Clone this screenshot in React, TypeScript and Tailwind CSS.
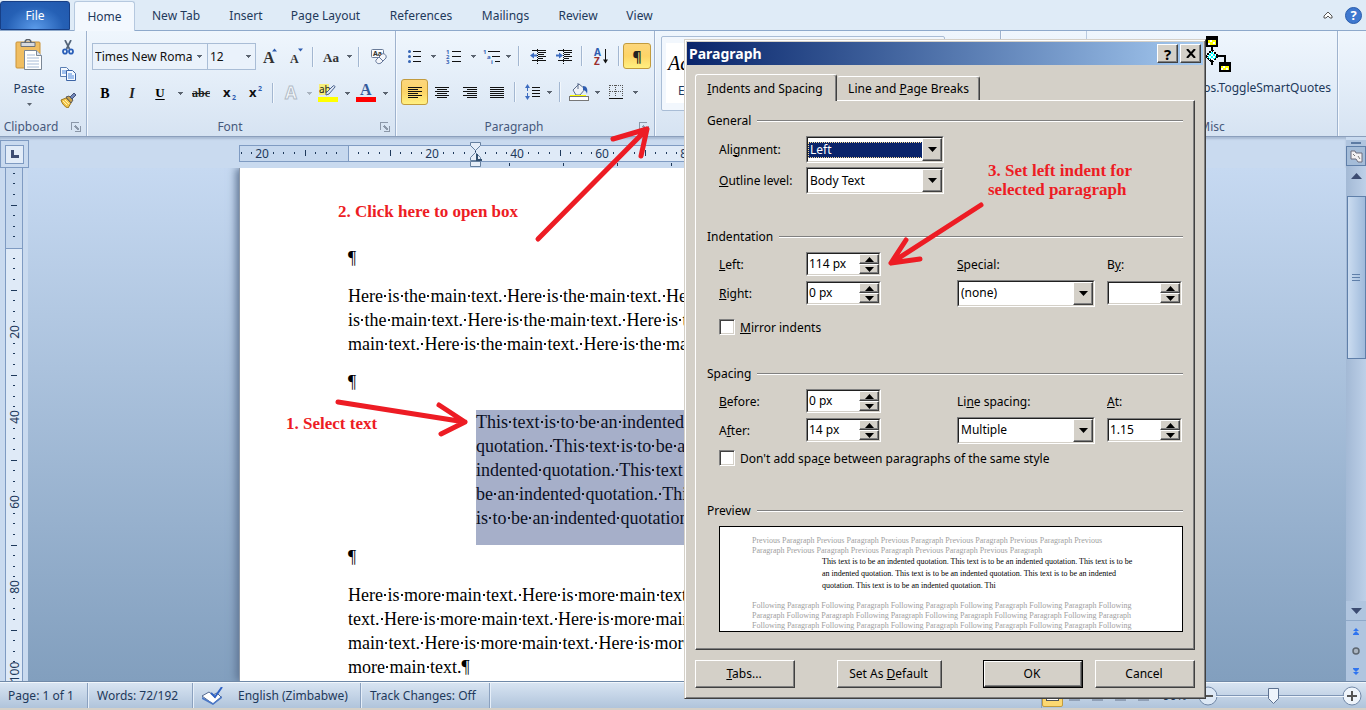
import { Fragment, type ReactNode } from "react";

const raised =
  "border border-t-white border-l-white border-b-[#404040] border-r-[#404040] bg-[#d4d0c8] shadow-[inset_-1px_-1px_#808080]";
const sunken =
  "border border-t-[#808080] border-l-[#808080] border-b-white border-r-white bg-[#d4d0c8]";
const sunkenInner =
  "border border-t-[#202020] border-l-[#202020] border-b-[#d4d0c8] border-r-[#d4d0c8] bg-white";

const ribbonTabs = [
  { name: "New Tab", width: "w-20" },
  { name: "Insert", width: "w-[60px]" },
  { name: "Page Layout", width: "w-[99px]" },
  { name: "References", width: "w-[92px]" },
  { name: "Mailings", width: "w-[77px]" },
  { name: "Review", width: "w-[68px]" },
  { name: "View", width: "w-[55px]" },
];

/* ---------- ribbon ---------- */

function Caret({ className = "w-3", faded = false }: { className?: string; faded?: boolean }) {
  return (
    <button aria-label="More options" className={`flex h-6 shrink-0 items-center justify-center ${className}`}>
      <svg width="5" height="3" viewBox="0 0 5 3" shapeRendering="crispEdges">
        <path d="M0 0h5L2.5 3z" fill={faded ? "#a9b3bf" : "#5b6470"} />
      </svg>
    </button>
  );
}

function Sep({ className = "w-2.5" }: { className?: string }) {
  return (
    <div className={`flex shrink-0 justify-center ${className}`}>
      <div className="h-5 w-0.5 border-l border-[#a3b7d1] bg-[#f3f8fd]" />
    </div>
  );
}

type ToolProps = {
  label: string;
  className: string;
  active?: boolean;
  children: ReactNode;
};

function Tool({ label, className, active = false, children }: ToolProps) {
  return (
    <button
      aria-label={label}
      className={`flex h-[26px] shrink-0 items-center justify-center ${className} ${
        active
          ? "rounded-[3px] border border-[#c29b3d] bg-linear-to-b from-[#fcd67c] via-[#fdd467] to-[#fff080]"
          : ""
      }`}
    >
      {children}
    </button>
  );
}

function Launcher({ label }: { label: string }) {
  return (
    <button aria-label={label} className="absolute right-[5px] bottom-1">
      <svg width="10" height="10" viewBox="0 0 10 10" fill="none" shapeRendering="crispEdges">
        <path d="M.5 8V.5H8" stroke="#8b97a8" />
        <path d="M4 4l4 4" stroke="#8b97a8" strokeWidth="1.5" />
        <path d="M9.5 4v5.5H4" stroke="#8b97a8" strokeWidth="2" />
      </svg>
    </button>
  );
}

type GroupProps = {
  title: string;
  className: string;
  launcher?: boolean;
  children: ReactNode;
};

function Group({ title, className, launcher = false, children }: GroupProps) {
  return (
    <section
      className={`relative flex shrink-0 flex-col border-r border-[#9fb3ce] shadow-[1px_0_#f5f9fe] ${className}`}
    >
      <div className="min-h-0 flex-1">{children}</div>
      <h2 className="h-[19px] text-center leading-5 text-[#46597c]">{title}</h2>
      {launcher && <Launcher label={`${title} settings`} />}
    </section>
  );
}

function Lines({ rows, y = 1 }: { rows: [number, number][]; y?: number }) {
  return (
    <g fill="#111" shapeRendering="crispEdges">
      {rows.map(([x, w], i) => (
        <rect key={i} x={x} y={y + i * 2} width={w} height="1" />
      ))}
    </g>
  );
}

function AlignIcon({ kind }: { kind: "left" | "center" | "right" | "justify" }) {
  const short = { left: 0, center: 2, right: 4, justify: 0 }[kind];
  const w = kind === "justify" ? 14 : 10;
  return (
    <svg width="14" height="13" viewBox="0 0 14 13">
      <Lines
        rows={[
          [0, 14],
          [short, w],
          [0, 14],
          [short, w],
          [0, 14],
          [short, w],
        ]}
      />
    </svg>
  );
}

function IndentIcon({ direction }: { direction: "in" | "out" }) {
  return (
    <svg width="17" height="15" viewBox="0 0 17 15">
      <Lines
        rows={[
          [2, 14],
          [8, 8],
          [8, 6],
          [8, 8],
          [8, 5],
          [2, 14],
        ]}
        y={1}
      />
      <path d="M7.5 0v15" stroke="#111" strokeDasharray="1 1" />
      {direction === "out" ? (
        <path d="M0 6.500l4-3v2h3v2h-3v2z" fill="#3c6cc0" />
      ) : (
        <path d="M7 6.500l-4-3v2h-3v2h3v2z" fill="#3c6cc0" />
      )}
    </svg>
  );
}

function PasteIcon() {
  return (
    <svg width="28" height="32" viewBox="0 0 28 32">
      <rect x="1" y="3" width="24" height="26" rx="1" fill="#f0be62" stroke="#c99237" />
      <path d="M6 3.500h14v4H6z" fill="#d7dade" stroke="#6d737b" />
      <path d="M10 3.500c0-4 6-4 6 0" fill="none" stroke="#5c6269" strokeWidth="1.500" />
      <path d="M9.500 11.500h12l5 5v14h-17z" fill="#fff" stroke="#7b8796" />
      <path d="M21.500 11.500v5h5" fill="#dbe2ea" stroke="#7b8796" />
      <path d="M12 16h8M12 19h12M12 22h12M12 25h12M12 28h12" stroke="#a7bbd7" />
    </svg>
  );
}

function CutIcon() {
  return (
    <svg width="12" height="15" viewBox="0 0 12 15" fill="none">
      <path d="M3 0l4.500 9M9 0L4.500 9" stroke="#536479" strokeWidth="1.700" />
      <ellipse cx="3" cy="11.500" rx="2" ry="2.200" stroke="#2b5fb8" strokeWidth="1.800" />
      <ellipse cx="9" cy="11.500" rx="2" ry="2.200" stroke="#2b5fb8" strokeWidth="1.800" />
    </svg>
  );
}

function CopyIcon() {
  return (
    <svg width="16" height="14" viewBox="0 0 16 14">
      <path d="M.5.5h6l3 3v6h-9z" fill="#f4f9ff" stroke="#5b7fb4" />
      <path d="M2 4h4M2 6h4" stroke="#4a86dd" />
      <path d="M6.500 3.500h6l3 3v7h-9z" fill="#f4f9ff" stroke="#3c64a5" />
      <path d="M8 7h4M8 9h6M8 11h6" stroke="#4a86dd" />
    </svg>
  );
}

function PainterIcon() {
  return (
    <svg width="17" height="15" viewBox="0 0 17 15">
      <path d="M1 7l5-2 5 5-3 5c-3-1-6-4-7-8z" fill="#f3c64b" stroke="#9c7722" />
      <path d="M3 8l4 4M5 7l4 4" stroke="#fff2b0" />
      <path d="M6 4l3-1 4 4-2 3z" fill="#c9a24a" stroke="#5c5c5c" />
      <path d="M10 4l4-4 2 2-4 4z" fill="#7287b8" stroke="#465379" />
    </svg>
  );
}

function GlyphIcon({ width, children }: { width: number; children: ReactNode }) {
  return (
    <svg
      width={width}
      height="20"
      viewBox={`0 0 ${width} 20`}
      className="overflow-visible font-['Liberation_Serif',serif] font-bold"
    >
      {children}
    </svg>
  );
}

function ClipboardGroup() {
  return (
    <Group title="Clipboard" className="w-[87px] [&>h2]:pr-6" launcher>
      <div className="flex pt-2">
        <button className="flex w-[58px] flex-col items-center text-[#1e395b]">
          <PasteIcon />
          <span className="mt-2 leading-5">Paste</span>
          <svg width="5" height="3" viewBox="0 0 5 3" className="mt-1">
            <path d="M0 0h5L2.500 3z" fill="#5b6470" />
          </svg>
        </button>
        <div className="flex w-5 flex-col items-center">
          <button aria-label="Cut" className="flex h-[26px] items-start pt-px">
            <CutIcon />
          </button>
          <button aria-label="Copy" className="flex h-[26px] items-start pt-0.5">
            <CopyIcon />
          </button>
          <button aria-label="Format Painter" className="flex h-[26px] items-start pt-0.5">
            <PainterIcon />
          </button>
        </div>
      </div>
    </Group>
  );
}

function FontGroup() {
  return (
    <Group title="Font" className="w-[309px] [&>h2]:pr-[22px]" launcher>
      <div className="flex flex-col gap-2.5 pt-3 pl-[5px]">
        <div className="flex items-center">
          <div className="flex h-[27px] w-[116px] items-center border border-[#a9bdd6] bg-[#eaf2fb] pl-0.5">
            <input
              aria-label="Font name"
              defaultValue="Times New Roman"
              className="w-[98px] bg-transparent text-[#111] outline-none"
            />
            <Caret />
          </div>
          <div className="-ml-px flex h-[27px] w-[49px] items-center border border-[#a9bdd6] bg-[#eaf2fb] pl-0.5">
            <input
              aria-label="Font size"
              defaultValue="12"
              className="w-8 bg-transparent text-[#111] outline-none"
            />
            <Caret />
          </div>
          <Tool label="Grow Font" className="w-7">
            <GlyphIcon width={14}>
              <text x="0" y="16" fontSize="16" fill="#333">A</text>
              <path d="M9 4.500h5l-2.500-3z" fill="#2f5db0" />
            </GlyphIcon>
          </Tool>
          <Tool label="Shrink Font" className="w-6">
            <GlyphIcon width={13}>
              <text x="0" y="16" fontSize="12" fill="#333">A</text>
              <path d="M8 1.500h5l-2.500 3z" fill="#2f5db0" />
            </GlyphIcon>
          </Tool>
          <Sep />
          <Tool label="Change Case" className="w-[26px]">
            <GlyphIcon width={16}>
              <text x="0" y="15" fontSize="13" fill="#333">Aa</text>
            </GlyphIcon>
          </Tool>
          <Caret className="w-2.5" />
          <Sep />
          <Tool label="Clear Formatting" className="w-7">
            <svg width="17" height="17" viewBox="0 0 17 17">
              <rect x="1.500" y="1.500" width="12" height="8" rx="1" fill="#f9fbff" stroke="#6a7c99" />
              <text x="3" y="8" fontSize="7" fill="#333" fontWeight="bold">Aa</text>
              <path d="M6 12l6-6c2-1 5 1 4 4l-5 5c-3 2-6-1-5-3z" fill="#f4f6fa" stroke="#65779a" />
              <path d="M9 9l4 4" stroke="#65779a" />
            </svg>
          </Tool>
        </div>
        <div className="flex items-center">
          <Tool label="Bold" className="w-[26px]">
            <span className="font-['Liberation_Serif',serif] text-[14px] font-bold text-black">B</span>
          </Tool>
          <Tool label="Italic" className="w-7">
            <span className="font-['Liberation_Serif',serif] text-[14px] font-bold text-[#222] italic">I</span>
          </Tool>
          <Tool label="Underline" className="w-7">
            <span className="font-['Liberation_Serif',serif] text-[13px] font-bold text-black underline underline-offset-2">
              U
            </span>
          </Tool>
          <Caret />
          <Tool label="Strikethrough" className="w-[30px]">
            <span className="font-['Liberation_Serif',serif] text-[12px] font-bold text-[#222] line-through">abc</span>
          </Tool>
          <Tool label="Subscript" className="w-[26px]">
            <GlyphIcon width={13}>
              <text x="0" y="14" fontSize="13" fill="#111" className="font-['Noto_Sans',sans-serif]">x</text>
              <text x="9" y="17" fontSize="7" fill="#2f5db0" className="font-['Noto_Sans',sans-serif]">2</text>
            </GlyphIcon>
          </Tool>
          <Tool label="Superscript" className="w-[26px]">
            <GlyphIcon width={13}>
              <text x="0" y="14" fontSize="13" fill="#111" className="font-['Noto_Sans',sans-serif]">x</text>
              <text x="9" y="8" fontSize="7" fill="#2f5db0" className="font-['Noto_Sans',sans-serif]">2</text>
            </GlyphIcon>
          </Tool>
          <Sep />
          <Tool label="Text Effects" className="w-[26px]">
            <GlyphIcon width={14}>
              <text
                x="1"
                y="16"
                fontSize="17"
                fill="#f4f8fc"
                stroke="#b3bcc7"
                className="font-['Noto_Sans',sans-serif]"
              >
                A
              </text>
            </GlyphIcon>
          </Tool>
          <Caret className="w-2.5" faded />
          <Tool label="Text Highlight Color" className="w-7">
            <svg width="20" height="20" viewBox="0 0 20 20">
              <rect x="1" y="1" width="10" height="11" fill="#f6ef7a" />
              <text x="1" y="10" fontSize="10" fill="#222">ab</text>
              <path d="M8 10l7-7c1-1 2 0 2 1l-6 7-3 1z" fill="#dfe7f3" stroke="#4b6490" />
              <rect y="14" width="20" height="5" fill="#ff0" />
            </svg>
          </Tool>
          <Caret className="w-2.5" />
          <Tool label="Font Color" className="w-7">
            <GlyphIcon width={20}>
              <text x="4" y="12" fontSize="16" fill="#355b9b">A</text>
              <rect y="14" width="20" height="5" fill="#f00" />
            </GlyphIcon>
          </Tool>
          <Caret className="w-2.5" />
        </div>
      </div>
    </Group>
  );
}

function ParagraphGroup() {
  return (
    <Group title="Paragraph" className="w-[259px] [&>h2]:pr-[22px]" launcher>
      <div className="flex flex-col gap-2.5 pt-3 pl-[5px]">
        <div className="flex items-center">
          <Tool label="Bullets" className="w-[26px]">
            <svg width="13" height="13" viewBox="0 0 13 13">
              <g fill="#3564b4">
                <circle cx="1.500" cy="1.500" r="1.500" />
                <circle cx="1.500" cy="6.500" r="1.500" />
                <circle cx="1.500" cy="11.500" r="1.500" />
              </g>
              <path d="M5 1.500h8M5 6.500h8M5 11.500h8" stroke="#111" />
            </svg>
          </Tool>
          <Caret />
          <Tool label="Numbering" className="w-7">
            <svg width="15" height="15" viewBox="0 0 15 15" className="overflow-visible">
              <g fill="#3564b4" fontSize="6" fontWeight="bold">
                <text x="0" y="5">1</text>
                <text x="0" y="10">2</text>
                <text x="0" y="15">3</text>
              </g>
              <path d="M6 2.500h9M6 7.500h9M6 12.500h9" stroke="#111" />
            </svg>
          </Tool>
          <Caret />
          <Tool label="Multilevel List" className="w-6">
            <svg width="17" height="15" viewBox="0 0 17 15" className="overflow-visible">
              <g fill="#3564b4" fontSize="6" fontWeight="bold">
                <text x="0" y="5">1</text>
                <text x="4" y="10">a</text>
                <text x="8" y="15">i</text>
              </g>
              <path d="M5 2.500h12M9 7.500h8M12 12.500h5" stroke="#111" />
            </svg>
          </Tool>
          <Caret className="w-2.5" />
          <Sep className="w-3" />
          <Tool label="Decrease Indent" className="w-[26px]">
            <IndentIcon direction="out" />
          </Tool>
          <Tool label="Increase Indent" className="w-[26px]">
            <IndentIcon direction="in" />
          </Tool>
          <Sep />
          <Tool label="Sort" className="w-7">
            <svg width="15" height="17" viewBox="0 0 15 17" fontSize="10" fontWeight="bold" className="overflow-visible">
              <text x="0" y="8" fill="#2f5db0">A</text>
              <text x="0" y="17" fill="#9b2d2d">Z</text>
              <path d="M11.500 1v13" stroke="#111" />
              <path d="M9 11.500h5l-2.500 4z" fill="#111" />
            </svg>
          </Tool>
          <Sep className="w-2" />
          <Tool label="Show paragraph marks" className="w-7" active>
            <span className="text-[14px] font-bold text-[#222]">¶</span>
          </Tool>
        </div>
        <div className="flex items-center">
          <Tool label="Align Left" className="w-[27px]" active>
            <AlignIcon kind="left" />
          </Tool>
          <Tool label="Center" className="w-7">
            <AlignIcon kind="center" />
          </Tool>
          <Tool label="Align Right" className="w-7">
            <AlignIcon kind="right" />
          </Tool>
          <Tool label="Justify" className="w-[26px]">
            <AlignIcon kind="justify" />
          </Tool>
          <Sep />
          <Tool label="Line Spacing" className="w-6">
            <svg width="15" height="16" viewBox="0 0 15 16">
              <path d="M2.500 3v10" stroke="#3c6cc0" strokeDasharray="4 2" />
              <path d="M0 4h5L2.500 0zM0 12h5l-2.500 4z" fill="#3c6cc0" />
              <path d="M7 3.500h8M7 6.500h8M7 9.500h8M7 12.500h8" stroke="#111" />
            </svg>
          </Tool>
          <Caret className="w-2.5" />
          <Sep className="w-3" />
          <Tool label="Shading" className="w-[26px]">
            <svg width="20" height="18" viewBox="0 0 20 18">
              <path d="M4 7l6-6 6 5-5 6H7z" fill="#eef2f8" stroke="#5d6f8e" />
              <path d="M9 0v6" stroke="#5d6f8e" />
              <path d="M14 3c4 0 5 3 4 8-1-3-2-4-4-4z" fill="#2f5db0" />
              <rect x="1" y="12" width="16" height="2" fill="#ff0" />
              <rect x=".5" y="13.500" width="19" height="4" fill="#fff" stroke="#777" />
            </svg>
          </Tool>
          <Caret className="w-2.5" />
          <Tool label="Borders" className="w-7">
            <svg width="14" height="14" viewBox="0 0 14 14" shapeRendering="crispEdges">
              <path
                d="M.5.5h13M.5 6.500h13M.5 0v12M6.500 0v12M13.500 0v12"
                stroke="#555"
                strokeDasharray="1 1"
              />
              <path d="M0 13.500h14" stroke="#111" />
            </svg>
          </Tool>
          <Caret className="w-2.5" />
        </div>
      </div>
    </Group>
  );
}

function StylesGroup() {
  return (
    <Group title="Styles" className="w-[346px]">
      <div className="mt-[5px] ml-1.5 h-[75px] w-[284px] rounded-[2px] border border-[#a9bdd6] bg-[#f2f7fd] py-1.5 pl-1">
        <button className="flex h-15 w-16 flex-col bg-white pt-1 pl-0.5 text-left">
          <span className="font-['Liberation_Serif',serif] text-[20px] leading-8 text-black italic">AaBb</span>
          <span className="pl-2.5 leading-6 text-[#1e395b]">Emphasis</span>
        </button>
      </div>
    </Group>
  );
}

function MacroIcon() {
  return (
    <svg width="38" height="36" viewBox="0 0 38 36" shapeRendering="crispEdges">
      <path d="M19 10v5M19 25v4M6 20h26v7" fill="none" stroke="#000" strokeWidth="2" />
      <path d="M13 0h12v11H13zM0 26h12v10H0zM26 26h12v10H26z" fill="#000" />
      <path d="M15 4h8v5h-8zM2 30h8v4H2zM28 30h8v4h-8z" fill="#ff0" />
      <path d="M17 4h2v2h-2zM20 6h2v2h-2zM15 7h2v2h-2zM30 30h2v2h-2zM33 32h2v2h-2zM28 32h2v2h-2z" fill="#fff" />
      <path d="M19 14l6 6-6 6-6-6z" fill="#fff" stroke="#000" strokeWidth="1.500" strokeDasharray="2 1" />
      <path d="M18 16h2v2h-2zM16 18h2v2h-2zM20 18h2v2h-2zM18 20h2v2h-2zM15 20h1v2h-1zM22 20h1v2h-1zM16 22h2v1h-2zM20 22h2v1h-2z" fill="#0ff" />
    </svg>
  );
}

function Ribbon() {
  return (
    <header className="shrink-0">
      <nav className="flex h-[31px] border-b border-[#8ea9cb] bg-[#dfebf7] text-[#1e395b]">
        <button className="mt-px h-[29px] w-[70px] rounded-t-[3px] border border-[#173f86] bg-[radial-gradient(ellipse_at_bottom,#5b9bea_0%,#2560b5_60%,#2158ad_100%)] text-white">
          File
        </button>
        <button className="mt-px ml-1 h-[30px] w-[61px] rounded-t-[3px] border border-b-0 border-[#b5c8df] bg-[#f3f8fe]">
          Home
        </button>
        {ribbonTabs.map((tab) => (
          <button key={tab.name} className={`pt-0.5 pl-0.5 ${tab.width}`}>
            {tab.name}
          </button>
        ))}
        <div className="ml-auto flex items-center gap-3 pr-1">
          <button aria-label="Minimize the Ribbon">
            <svg width="10" height="8" viewBox="0 0 10 8">
              <path d="M1 5l4-4 4 4v2H7L5 5 3 7H1z" fill="#fff" stroke="#555" />
            </svg>
          </button>
          <button aria-label="Help">
            <svg width="17" height="17" viewBox="0 0 17 17">
              <circle cx="8.500" cy="8.500" r="8" fill="#3f78cf" stroke="#2a5cab" />
              <text x="8.500" y="13" fontSize="13" fontWeight="bold" fill="#fff" textAnchor="middle">?</text>
            </svg>
          </button>
        </div>
      </nav>
      <div className="flex h-[106px] overflow-hidden border-b border-[#8b9fbc] bg-linear-to-b from-[#eff6fd] via-[#e3edf8] to-[#d6e3f2]">
        <ClipboardGroup />
        <FontGroup />
        <ParagraphGroup />
        <StylesGroup />
        <div className="w-[86px] shrink-0 border-r border-[#b9cae0]" />
        <Group title="Misc" className="w-[251px]">
          <button className="flex w-full flex-col items-center pt-[5px] text-[#1e395b]">
            <MacroIcon />
            <span className="mt-1.5 w-full pr-1.5 text-right leading-5">Normal.NewMacros.ToggleSmartQuotes</span>
          </button>
        </Group>
      </div>
    </header>
  );
}

/* ---------- rulers ---------- */

const rulerStep = 85 / 8;

function HorizontalRuler() {
  const marks = Array.from({ length: 75 }, (_, i) => i - 10).filter((k) => k !== 0);
  return (
    <svg width="868" height="28" className="shrink-0 overflow-hidden text-[12px]" shapeRendering="crispEdges">
      <rect x=".5" y="5.500" width="867" height="16" fill="#dfeaf7" stroke="#7f9bc2" />
      <rect x=".5" y="5.500" width="109" height="16" fill="#c6d8ee" stroke="#7f9bc2" />
      {marks.map((k) => {
        const x = Math.round(108 + k * rulerStep);
        if (k % 8 === 0) {
          return (
            <text key={k} x={x} y="18" textAnchor="middle" fill="#1e395b">
              {Math.abs(k / 8) * 20}
            </text>
          );
        }
        return k % 4 === 0 ? (
          <rect key={k} x={x} y="10" width="1" height="6" fill="#1e395b" />
        ) : (
          <rect key={k} x={x} y="12" width="1" height="2" fill="#1e395b" />
        );
      })}
      {[270, 324, 378, 432, 486].map((x) => (
        <rect key={x} x={x} y="23" width="1" height="3" fill="#1e395b" />
      ))}
      <g fill="#e6eef8" stroke="#66809f" shapeRendering="auto">
        <path d="M231.500 2.500h10v3l-5 5-5-5z" />
        <path d="M236.500 12.500l5 5v3h-10v-3z" />
        <path d="M231.500 21.500h10v5h-10z" />
      </g>
      <path d="M237.500 14v6h5" fill="none" stroke="#33506f" strokeWidth="2" />
    </svg>
  );
}

function VerticalRuler() {
  const marks = Array.from({ length: 90 }, (_, i) => i - 7).filter((k) => k !== 0);
  return (
    <svg className="h-full w-[18px] overflow-hidden text-[12px]" shapeRendering="crispEdges">
      <rect width="18" height="100%" fill="#dfeaf7" />
      <rect width="18" height="80" fill="#c6d8ee" />
      <path d="M0 80.500h18" stroke="#7f9bc2" />
      <path d="M.5 0v1200M17.500 0v1200" stroke="#7f9bc2" />
      {marks.map((k) => {
        const y = Math.round(79 + k * rulerStep);
        if (k % 8 === 0) {
          return (
            <text key={k} transform={`translate(14 ${y}) rotate(-90)`} textAnchor="middle" fill="#1e395b">
              {Math.abs(k / 8) * 20}
            </text>
          );
        }
        return k % 4 === 0 ? (
          <rect key={k} x="6" y={y} width="6" height="1" fill="#1e395b" />
        ) : (
          <rect key={k} x="8" y={y} width="2" height="1" fill="#1e395b" />
        );
      })}
    </svg>
  );
}

/* ---------- document ---------- */

// Formatting marks are on, so every space carries a dot.
function Line({ children }: { children: string }) {
  return (
    <div className="whitespace-pre">
      {children.split(" ").map((word, i) => (
        <Fragment key={i}>
          {i > 0 && (
            <span className="bg-[linear-gradient(#111,#111)] bg-[length:2px_2px] bg-center bg-no-repeat"> </span>
          )}
          {word}
        </Fragment>
      ))}
    </div>
  );
}

function DocumentPage() {
  return (
    <article className="ml-[211px] w-[868px] shrink-0 overflow-hidden border-l border-[#8c97a6] bg-white pt-[78px] pl-[108px] font-['Liberation_Serif',serif] text-[18px] leading-6 text-black shadow-[-3px_0_8px_#5f7594]">
      <p>¶</p>
      <div className="mt-3.5">
        <Line>Here is the main text. Here is the main text. Here is the main text. Here</Line>
        <Line>is the main text. Here is the main text. Here is the main text. Here is the</Line>
        <Line>main text. Here is the main text. Here is the main text.¶</Line>
      </div>
      <p className="mt-3.5">¶</p>
      <div className="mt-4 ml-32 bg-[#a6afc9] pb-[15px] text-[#0b1024]">
        <Line>This text is to be an indented quotation. This text is to be an indented</Line>
        <Line>quotation. This text is to be an indented quotation. This text is to be an</Line>
        <Line>indented quotation. This text is to be an indented quotation. This text is to</Line>
        <Line>be an indented quotation. This text is to be an indented quotation. This text</Line>
        <Line>is to be an indented quotation.¶</Line>
      </div>
      <p>¶</p>
      <div className="mt-3.5">
        <Line>Here is more main text. Here is more main text. Here is more main</Line>
        <Line>text. Here is more main text. Here is more main text. Here is more</Line>
        <Line>main text. Here is more main text. Here is more main text. Here is</Line>
        <Line>more main text.¶</Line>
      </div>
    </article>
  );
}

function ScrollBar() {
  return (
    <aside className="mt-[3px] flex w-5 shrink-0 flex-col items-center bg-[#b0c5df]">
      <div className="flex h-1.5 items-center">
        <div className="h-0.5 w-2.5 bg-[#5d7ba3]" />
      </div>
      <button
        aria-label="View Ruler"
        className="flex h-5 w-full items-center justify-center border border-[#5f7fa9] bg-[#a4bcd8]"
      >
        <svg width="13" height="13" viewBox="0 0 13 13">
          <path d="M1 1h4l1 2h6v9H8L6 9H1z" fill="#f3f1f3" stroke="#6c6c7c" />
          <path d="M3 4l2 2M8 6l2 3" stroke="#777" />
        </svg>
      </button>
      <div className="flex w-full flex-1 flex-col items-center bg-linear-to-r from-[#a3b9d5] to-[#bdd0e8]">
        <button aria-label="Scroll up" className="flex h-[30px] w-full justify-center pt-[7px]">
          <svg width="11" height="6" viewBox="0 0 11 6">
            <path d="M0 6L5.500 0 11 6z" fill="#3c4c72" />
          </svg>
        </button>
        <div className="flex h-[163px] w-[19px] items-center justify-center border border-[#5f7fa9] bg-linear-to-r from-[#cbdcf0] to-[#9fbadb]">
          <div className="h-[7px] w-2 bg-[repeating-linear-gradient(#5f7fa9_0_1px,transparent_1px_3px)]" />
        </div>
      </div>
      <button aria-label="Scroll down" className="flex h-5 w-full items-center justify-center border-b border-[#8fa9c9]">
        <svg width="11" height="6" viewBox="0 0 11 6">
          <path d="M0 0h11L5.500 6z" fill="#3c4c72" />
        </svg>
      </button>
      <button aria-label="Previous page" className="flex h-5 items-center">
        <svg width="6" height="7" viewBox="0 0 6 7" fill="#2f74f0">
          <path d="M3 0l3 3H0zM3 3l3 3H0zM0 6h6v1H0z" />
        </svg>
      </button>
      <button aria-label="Select browse object" className="flex h-5 items-center">
        <svg width="8" height="8" viewBox="0 0 8 8">
          <circle cx="4" cy="4" r="3" fill="#aab4c0" stroke="#5d6670" strokeWidth="1.500" />
        </svg>
      </button>
      <button aria-label="Next page" className="flex h-5 items-center">
        <svg width="6" height="7" viewBox="0 0 6 7" fill="#2f74f0">
          <path d="M0 0h6v1H0zM0 1h6L3 4zM0 4h6L3 7z" />
        </svg>
      </button>
    </aside>
  );
}

function Workspace() {
  return (
    <div className="flex min-h-0 flex-1 border-b border-[#7089a8] bg-[#c9daef]">
      <main className="flex min-w-0 flex-1 flex-col overflow-hidden">
        <div className="flex h-[31px] shrink-0 pt-[3px] shadow-[inset_0_2px_2px_#a9bbd3]">
          <button
            aria-label="Tab selector"
            className="flex h-7 w-[29px] shrink-0 items-center justify-center border border-[#7f9bc2]"
          >
            <span className="flex size-[19px] items-center justify-center border border-[#7f9bc2] bg-[#e2ecf8]">
              <svg width="8" height="8" viewBox="0 0 8 8">
                <path d="M1.500 0v6.500H8" fill="none" stroke="#3c4c72" strokeWidth="3" />
              </svg>
            </span>
          </button>
          <div className="ml-[210px]">
            <HorizontalRuler />
          </div>
        </div>
        <div className="flex min-h-0 flex-1">
          <div className="w-7 shrink-0 pl-[5px]">
            <VerticalRuler />
          </div>
          <div className="flex min-w-0 flex-1 overflow-hidden bg-linear-to-b from-[#c6d9f1] to-[#829fbe]">
            <DocumentPage />
          </div>
        </div>
      </main>
      <ScrollBar />
    </div>
  );
}

/* ---------- status bar ---------- */

const statusCell = "flex h-full items-center border-r border-[#8ba1bf] shadow-[1px_0_#e6eff9]";

function StatusBar() {
  return (
    <footer className="flex h-[26px] shrink-0 items-center border-t border-[#f2f7fc] bg-linear-to-b from-[#d8e4f2] to-[#b0c4db] text-[#1e395b]">
      <div className={`w-[88px] pl-2 ${statusCell}`}>Page: 1 of 1</div>
      <div className={`w-[105px] pl-[9px] ${statusCell}`}>Words: 72/192</div>
      <div className={`w-[168px] gap-[15px] pl-2 ${statusCell}`}>
        <svg width="22" height="18" viewBox="0 0 22 18">
          <path d="M1 9l7-4 4 3 4-2 4 4-8 7z" fill="#fff" stroke="#53698f" />
          <path d="M1 10v2l11 6 9-7v-2l-9 7z" fill="#4d79c7" />
          <path d="M12 8l2 3" stroke="#53698f" />
          <path d="M10 6l4 4 7-10" fill="none" stroke="#2f62c4" strokeWidth="2" />
        </svg>
        English (Zimbabwe)
      </div>
      <div className={`w-[129px] pl-[9px] ${statusCell}`}>Track Changes: Off</div>
      <div className="ml-auto flex h-full items-center">
        <div className="flex h-full items-center border-l border-[#8ba1bf]">
          <button
            aria-label="Print Layout"
            className="flex h-[23px] w-[21px] items-center justify-center rounded-[2px] border border-[#c29b3d] bg-[#fdd870]"
          >
            <svg width="13" height="11" viewBox="0 0 13 11">
              <rect x=".5" y=".5" width="12" height="10" fill="#fff" stroke="#555" />
            </svg>
          </button>
          {["Full Screen Reading", "Web Layout", "Outline", "Draft"].map((view) => (
            <button key={view} aria-label={view} className="flex w-[23px] items-center justify-center">
              <svg width="13" height="11" viewBox="0 0 13 11">
                <path d="M1 1.500h11M1 4.500h11M1 7.500h11M1 10h11" stroke="#66758c" />
              </svg>
            </button>
          ))}
        </div>
        <span className="ml-2 w-[35px]">90%</span>
        <button aria-label="Zoom out" className="-mr-0.5 shrink-0">
          <svg width="20" height="20" viewBox="0 0 20 20">
            <circle cx="10" cy="10" r="9" fill="#dde8f5" stroke="#7389a8" />
            <path d="M5 10h10" stroke="#555" strokeWidth="2" />
          </svg>
        </button>
        <label className="relative flex h-5 w-32 items-center">
          <span className="sr-only">Zoom</span>
          <span className="h-px w-full bg-[#7f96b6] shadow-[0_1px_#edf4fb]" />
          <svg width="11" height="16" viewBox="0 0 11 16" className="absolute left-[52px]">
            <path d="M.5.5h10v10l-5 5-5-5z" fill="#eef4fb" stroke="#5c7190" />
          </svg>
          <input type="range" min="10" max="190" defaultValue="90" className="absolute inset-0 opacity-0" />
        </label>
        <button aria-label="Zoom in" className="mr-1 -ml-0.5 shrink-0">
          <svg width="20" height="20" viewBox="0 0 20 20">
            <circle cx="10" cy="10" r="9" fill="#eef4fb" stroke="#7389a8" />
            <path d="M5 10h10M10 5v10" stroke="#555" strokeWidth="2" />
          </svg>
        </button>
      </div>
    </footer>
  );
}

/* ---------- paragraph dialog ---------- */

function Triangle({ up = false }: { up?: boolean }) {
  return (
    <svg width="9" height="5" viewBox="0 0 9 5">
      <path d={up ? "M0 5L4.500 0 9 5z" : "M0 0h9L4.500 5z"} fill="#000" />
    </svg>
  );
}

type SelectBoxProps = {
  id: string;
  value: string;
  options: string[];
  focused?: boolean;
};

function SelectBox({ id, value, options, focused = false }: SelectBoxProps) {
  return (
    <div className={`h-[27px] w-[138px] ${sunken}`}>
      <div className={`relative flex h-full items-center ${sunkenInner}`}>
        <select
          id={id}
          defaultValue={value}
          className={`w-full appearance-none pr-5 pl-0.5 outline-none ${
            focused ? "mr-[19px] h-4 border border-dotted border-[#f5db95] bg-[#0a246a] pl-px leading-[14px] text-white" : "h-full"
          }`}
        >
          {options.map((option) => (
            <option key={option}>{option}</option>
          ))}
        </select>
        <span className={`pointer-events-none absolute inset-y-0 right-0 flex w-5 items-center justify-center ${raised}`}>
          <Triangle />
        </span>
      </div>
    </div>
  );
}

function SpinBox({ id, value }: { id: string; value: string }) {
  return (
    <div className={`h-6 w-[75px] ${sunken}`}>
      <div className={`flex h-full ${sunkenInner}`}>
        <input id={id} defaultValue={value} className="min-w-0 flex-1 pl-px outline-none" />
        <div className="flex w-5 shrink-0 flex-col">
          <button aria-label="Increase" className={`flex flex-1 items-center justify-center ${raised}`}>
            <Triangle up />
          </button>
          <button aria-label="Decrease" className={`flex flex-1 items-center justify-center ${raised}`}>
            <Triangle />
          </button>
        </div>
      </div>
    </div>
  );
}

function CheckBox({ id, children }: { id: string; children: ReactNode }) {
  return (
    <div className="flex h-4 items-center gap-[5px] pl-3">
      <input
        id={id}
        type="checkbox"
        className="size-4 appearance-none border border-t-[#808080] border-r-white border-b-white border-l-[#808080] bg-white shadow-[inset_1px_1px_#404040,inset_-1px_-1px_#d4d0c8]"
      />
      <label htmlFor={id} className="pt-0.5">
        {children}
      </label>
    </div>
  );
}

function Heading({ children }: { children: ReactNode }) {
  return (
    <h3 className="mb-[5px] flex h-5 items-center gap-1.5">
      {children}
      <span className="h-0.5 flex-1 border-t border-[#808080] bg-white" />
    </h3>
  );
}

const fieldGrid =
  "grid grid-cols-[87px_151px_150px_75px] auto-rows-[24px] items-center gap-y-[5px] pl-3 [&_label]:pt-0.5";

function ParagraphDialog() {
  return (
    <div
      role="dialog"
      aria-label="Paragraph"
      className="absolute top-[39px] left-[684px] w-[522px] border border-t-[#d4d0c8] border-r-[#404040] border-b-[#404040] border-l-[#d4d0c8] bg-[#d4d0c8] p-0.5 text-black shadow-[inset_1px_1px_#fff,inset_-1px_-1px_#808080]"
    >
      <div className="flex h-[23px] items-center bg-linear-to-r from-[#0a246a] to-[#a6caf0] px-0.5 text-white">
        <h2 className="flex-1 text-[14px] leading-5 font-bold">Paragraph</h2>
        <button aria-label="Help" className={`flex h-[19px] w-[21px] items-center justify-center ${raised}`}>
          <span className="text-[15px] leading-4 font-bold text-black">?</span>
        </button>
        <button aria-label="Close" className={`ml-0.5 flex h-[19px] w-[21px] items-center justify-center ${raised}`}>
          <svg width="10" height="9" viewBox="0 0 10 9">
            <path d="M1 0l8 9M9 0L1 9" stroke="#000" strokeWidth="2" />
          </svg>
        </button>
      </div>

      <div className="px-2 pt-[9px] pb-2">
        <div className="flex items-end">
          <button className="relative z-10 -mb-px h-[27px] w-[142px] rounded-t-[3px] border border-b-0 border-t-white border-r-[#404040] border-l-white bg-[#d4d0c8] pt-px pr-0.5 shadow-[inset_-1px_0_#808080]">
            <u>I</u>ndents and Spacing
          </button>
          <button className="h-6 w-[143px] rounded-t-[3px] border border-b-0 border-t-white border-r-[#404040] border-l-transparent bg-[#d4d0c8] pt-px shadow-[inset_-1px_0_#808080]">
            Line and <u>P</u>age Breaks
          </button>
        </div>

        <div className="h-[550px] border border-t-white border-r-[#404040] border-b-[#404040] border-l-white px-[11px] pt-2.5 shadow-[inset_-1px_-1px_#808080]">
          <Heading>General</Heading>
          <div className="grid grid-cols-[87px_138px] items-center gap-y-1 pl-3">
            <label htmlFor="alignment">
              Ali<u>g</u>nment:
            </label>
            <SelectBox id="alignment" value="Left" options={["Left", "Centered", "Right", "Justified"]} focused />
            <label htmlFor="outline">
              <u>O</u>utline level:
            </label>
            <SelectBox id="outline" value="Body Text" options={["Body Text", "Level 1", "Level 2"]} />
          </div>

          <div className="mt-[33px]">
            <Heading>Indentation</Heading>
            <div className={fieldGrid}>
              <label htmlFor="left">
                <u>L</u>eft:
              </label>
              <SpinBox id="left" value="114 px" />
              <label htmlFor="special">
                <u>S</u>pecial:
              </label>
              <label htmlFor="by">
                B<u>y</u>:
              </label>
              <label htmlFor="right">
                <u>R</u>ight:
              </label>
              <SpinBox id="right" value="0 px" />
              <SelectBox id="special" value="(none)" options={["(none)", "First line", "Hanging"]} />
              <SpinBox id="by" value="" />
            </div>
            <div className="mt-3.5">
              <CheckBox id="mirror">
                <u>M</u>irror indents
              </CheckBox>
            </div>
          </div>

          <div className="mt-[29px]">
            <Heading>Spacing</Heading>
            <div className={fieldGrid}>
              <label htmlFor="before">
                <u>B</u>efore:
              </label>
              <SpinBox id="before" value="0 px" />
              <label htmlFor="line-spacing">
                Li<u>n</u>e spacing:
              </label>
              <label htmlFor="at">
                <u>A</u>t:
              </label>
              <label htmlFor="after">
                A<u>f</u>ter:
              </label>
              <SpinBox id="after" value="14 px" />
              <SelectBox id="line-spacing" value="Multiple" options={["Single", "Double", "Multiple"]} />
              <SpinBox id="at" value="1.15" />
            </div>
            <div className="mt-2">
              <CheckBox id="same-style">
                Don't add spa<u>c</u>e between paragraphs of the same style
              </CheckBox>
            </div>
          </div>

          <div className="mt-[35px]">
            <Heading>Preview</Heading>
            <div className="ml-3 h-[106px] overflow-hidden border border-black bg-white pt-[9px] pl-8 font-['Liberation_Serif',serif] text-[8px] leading-[10px] whitespace-nowrap text-[#a0a0a0]">
              <p>
                Previous Paragraph Previous Paragraph Previous Paragraph Previous Paragraph Previous Paragraph Previous
                <br />
                Paragraph Previous Paragraph Previous Paragraph Previous Paragraph Previous Paragraph
              </p>
              <p className="mb-[9px] pl-[70px] leading-3 text-black">
                This text is to be an indented quotation. This text is to be an indented quotation. This text is to be
                <br />
                an indented quotation. This text is to be an indented quotation. This text is to be an indented
                <br />
                quotation. This text is to be an indented quotation. Thi
              </p>
              <p>
                Following Paragraph Following Paragraph Following Paragraph Following Paragraph Following Paragraph Following
                <br />
                Paragraph Following Paragraph Following Paragraph Following Paragraph Following Paragraph Following Paragraph
                <br />
                Following Paragraph Following Paragraph Following Paragraph Following Paragraph Following Paragraph Following
              </p>
            </div>
          </div>
        </div>

        <div className="mt-2.5 flex justify-between">
          <div className="flex gap-[42px]">
            <button className={`h-7 w-[100px] pr-0.5 ${raised}`}>
              <u>T</u>abs...
            </button>
            <button className={`h-7 w-[105px] pr-0.5 ${raised}`}>
              Set As <u>D</u>efault
            </button>
          </div>
          <div className="flex gap-3">
            <div className="h-7 w-[100px] border border-black">
              <button className={`h-full w-full pr-0.5 ${raised}`}>OK</button>
            </div>
            <button className={`h-7 w-[100px] pr-0.5 ${raised}`}>Cancel</button>
          </div>
        </div>
      </div>
    </div>
  );
}

/* ---------- tutorial notes drawn over the window ---------- */

const note =
  "absolute font-['Liberation_Serif',serif] text-[17px] leading-[19px] font-bold whitespace-nowrap text-[#ed1c24]";

function Notes() {
  return (
    <div className="pointer-events-none absolute inset-0">
      <p className={`top-[414px] left-[286px] ${note}`}>1. Select text</p>
      <p className={`top-[202px] left-[338px] ${note}`}>2. Click here to open box</p>
      <p className={`top-[161px] left-[988px] ${note}`}>
        3. Set left indent for
        <br />
        selected paragraph
      </p>
      <svg
        className="h-full w-full"
        fill="none"
        stroke="#ed1c24"
        strokeWidth="5"
        strokeLinecap="round"
        strokeLinejoin="round"
      >
        <path d="M338 402L465 422M439 405L465 422L441 434" />
        <path d="M538 239L647 129M613 139L647 129L641 156" />
        <path d="M981 205L891 263M906 240L891 263L920 259" />
      </svg>
    </div>
  );
}

export default function App() {
  return (
    <div className="relative flex h-screen w-full flex-col overflow-hidden border-b-2 border-[#d4d0c8] font-['Noto_Sans',sans-serif] text-[12px]">
      <Ribbon />
      <Workspace />
      <StatusBar />
      <ParagraphDialog />
      <Notes />
    </div>
  );
}
